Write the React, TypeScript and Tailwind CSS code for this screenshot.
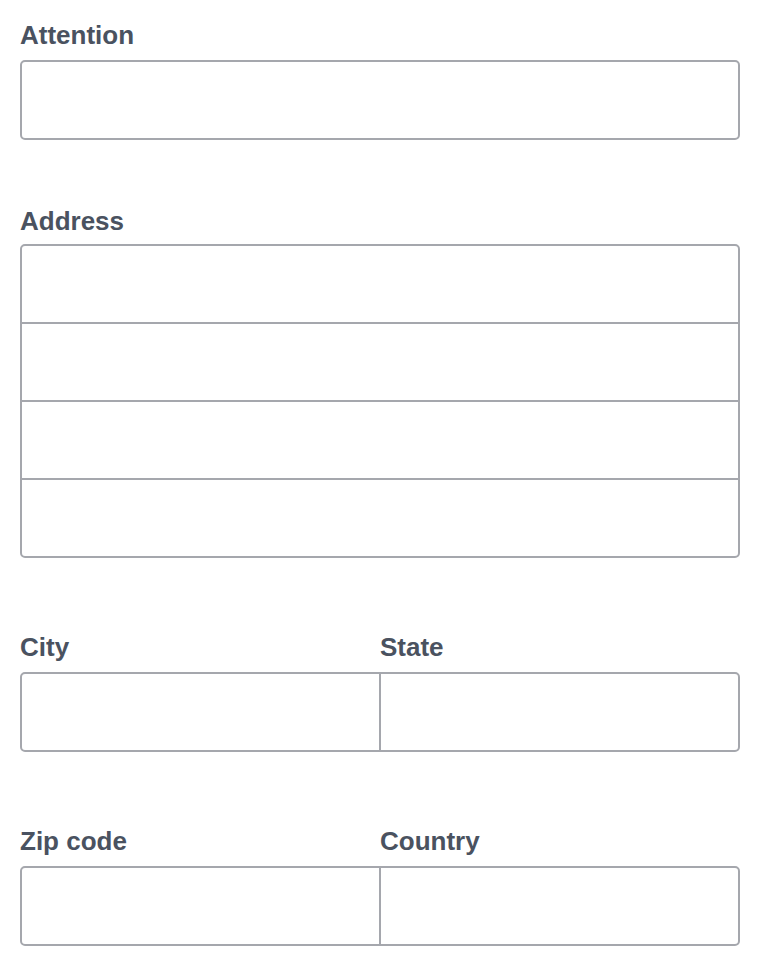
const label = "block text-[26px] leading-[30px] font-bold text-[#4a5260] [font-family:'Liberation_Sans',Arial,sans-serif]";
const box = "block w-full h-[80px] border-2 border-[#a5a7ad] bg-white outline-none";

function Field({ title, className = "" }: { title: string; className?: string }) {
  return (
    <div className={className}>
      <label className={label}>{title}</label>
    </div>
  );
}

export default function App() {
  return (
    <div className="bg-white min-h-[968px] pl-5 pr-[28px] pt-[20px]">
      <Field title="Attention" />
      <input className={`${box} mt-[10px] rounded-[5px]`} />

      <Field title="Address" className="mt-[66px]" />
      <div className="mt-[8px]">
        <input className={`${box} rounded-t-[5px]`} />
        <input className={`${box} -mt-[2px]`} />
        <input className={`${box} -mt-[2px]`} />
        <input className={`${box} -mt-[2px] rounded-b-[5px]`} />
      </div>

      <div className="mt-[74px] grid grid-cols-2">
        <span className={label}>City</span>
        <span className={label}>State</span>
      </div>
      <div className="mt-[10px] flex">
        <input className={`${box} w-[360px] rounded-l-[5px]`} />
        <input className={`${box} -ml-[2px] w-[362px] rounded-r-[5px]`} />
      </div>

      <div className="mt-[74px] grid grid-cols-2">
        <span className={label}>Zip code</span>
        <span className={label}>Country</span>
      </div>
      <div className="mt-[10px] flex">
        <input className={`${box} w-[360px] rounded-l-[5px]`} />
        <input className={`${box} -ml-[2px] w-[362px] rounded-r-[5px]`} />
      </div>
    </div>
  );
}
